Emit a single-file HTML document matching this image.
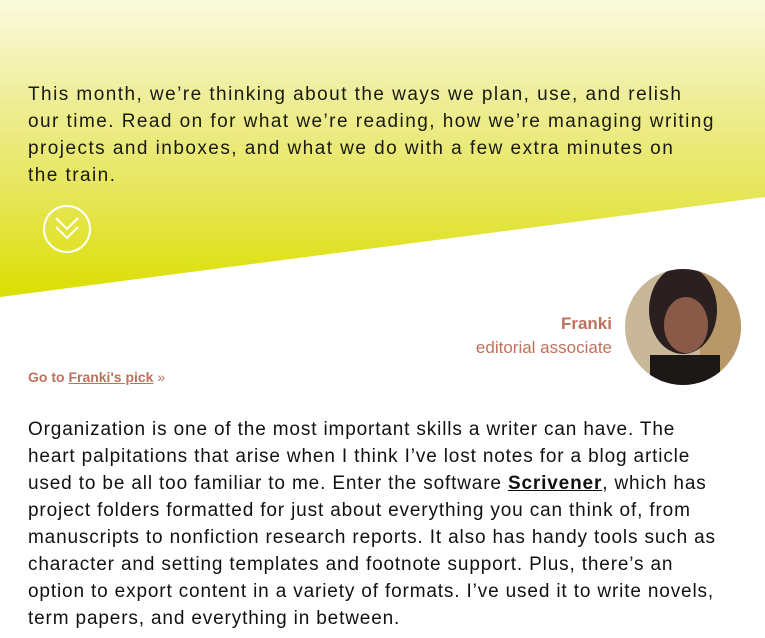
<!DOCTYPE html>
<html><head><meta charset="utf-8"><style>
body{margin:0;width:765px;height:638px;overflow:hidden;background:#fff;font-family:"Liberation Sans",sans-serif;position:relative}
.bg{position:absolute;left:0;top:0}
.l{position:absolute;left:28px;white-space:nowrap;color:#111;font-size:19px;letter-spacing:0.85px}
.i{letter-spacing:1.45px;color:#1a1a10}
</style></head><body>
<svg class="bg" width="765" height="638">
<defs><linearGradient id="g" x1="0" y1="0" x2="0" y2="1"><stop offset="0" stop-color="#fbfadf"/><stop offset="0.35" stop-color="#eeed95"/><stop offset="0.65" stop-color="#e6e65a"/><stop offset="1" stop-color="#dcdf00"/></linearGradient>
<clipPath id="c"><circle cx="683" cy="327" r="58"/></clipPath></defs>
<polygon points="0,0 765,0 765,197 0,297" fill="url(#g)"/>
<circle cx="67" cy="229" r="23" fill="none" stroke="#fff" stroke-width="2"/>
<polyline points="56,218 67,229 78,218" fill="none" stroke="#fff" stroke-width="2"/>
<polyline points="56,227 67,238 78,227" fill="none" stroke="#fff" stroke-width="2"/>
<g clip-path="url(#c)">
<rect x="620" y="265" width="130" height="130" fill="#c9b79a"/>
<rect x="700" y="265" width="50" height="130" fill="#b89868"/>
<ellipse cx="683" cy="310" rx="34" ry="44" fill="#2a2020"/>
<ellipse cx="686" cy="325" rx="22" ry="28" fill="#8a5a48"/>
<rect x="650" y="355" width="70" height="45" fill="#1c1818"/>
</g>
</svg>
<div class="l i" style="top:84px">This month, we’re thinking about the ways we plan, use, and relish</div>
<div class="l i" style="top:111px">our time. Read on for what we’re reading, how we’re managing writing</div>
<div class="l i" style="top:138px">projects and inboxes, and what we do with a few extra minutes on</div>
<div class="l i" style="top:165px">the train.</div>
<div style="position:absolute;right:153px;top:312px;text-align:right;color:#c0715d;font-size:17px;line-height:24px"><b>Franki</b><br>editorial associate</div>
<div style="position:absolute;left:28px;top:369px;color:#c0715d;font-size:14px;font-weight:bold">Go to <u>Franki's pick</u> <span style="font-weight:normal">»</span></div>
<div class="l" style="top:419px">Organization is one of the most important skills a writer can have. The</div>
<div class="l" style="top:446px">heart palpitations that arise when I think I’ve lost notes for a blog article</div>
<div class="l" style="top:473px">used to be all too familiar to me. Enter the software <b><u>Scrivener</u></b>, which has</div>
<div class="l" style="top:500px">project folders formatted for just about everything you can think of, from</div>
<div class="l" style="top:527px">manuscripts to nonfiction research reports. It also has handy tools such as</div>
<div class="l" style="top:554px">character and setting templates and footnote support. Plus, there’s an</div>
<div class="l" style="top:581px">option to export content in a variety of formats. I’ve used it to write novels,</div>
<div class="l" style="top:608px">term papers, and everything in between.</div>
</body></html>
